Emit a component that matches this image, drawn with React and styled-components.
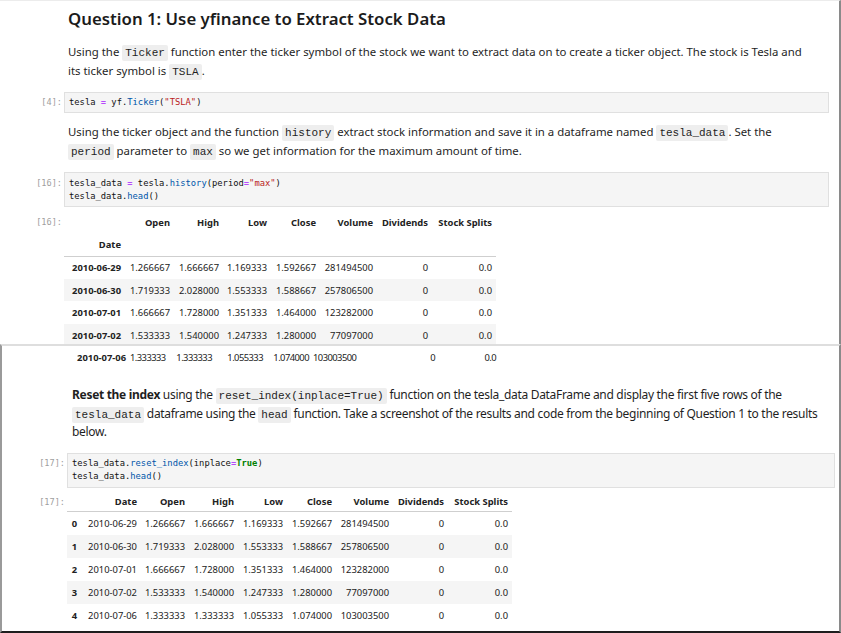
import React from "react"
import styled, { createGlobalStyle } from "styled-components"

const GlobalStyle = createGlobalStyle`
  html, body {
    margin: 0;
    padding: 0;
    background: #fff;
  }
  body {
    font-family: "Noto Sans", "Open Sans", sans-serif;
    color: #212121;
  }
`

const firstFrame = [
  ["2010-06-29", "1.266667", "1.666667", "1.169333", "1.592667", "281494500", "0", "0.0"],
  ["2010-06-30", "1.719333", "2.028000", "1.553333", "1.588667", "257806500", "0", "0.0"],
  ["2010-07-01", "1.666667", "1.728000", "1.351333", "1.464000", "123282000", "0", "0.0"],
  ["2010-07-02", "1.533333", "1.540000", "1.247333", "1.280000", "77097000", "0", "0.0"],
]
const lastRow = ["2010-07-06", "1.333333", "1.333333", "1.055333", "1.074000", "103003500", "0", "0.0"]
const allRows = [...firstFrame, lastRow]
const columns = ["Open", "High", "Low", "Close", "Volume", "Dividends", "Stock Splits"]

// column widths measured off the two screenshots
const widthsByDate = [61, 49, 49, 48, 49, 57, 55, 64]
const widthsTail = [63, 39, 47, 51, 46, 41, 85, 61]
const widthsReset = [14, 60, 48, 49, 49, 49, 57, 55, 64]

const Shot = styled.section`
  box-sizing: border-box;
  width: 841px;
  height: ${(p) => p.$h}px;
  overflow: hidden;
  border-right: 2px solid #8a8a8a;
  border-top: ${(p) => (p.$bottom ? "2px solid #dedede" : "1px solid #ececec")};
  border-left: ${(p) => (p.$bottom ? "2px solid #9a9a9a" : "none")};
  border-bottom: ${(p) => (p.$bottom ? "2px solid #1e1e1e" : "none")};
  padding-right: ${(p) => (p.$bottom ? 4 : 10)}px;
`

const CellRow = styled.div`
  display: flex;
  align-items: flex-start;
  margin-top: ${(p) => p.$mt || 0}px;
`

const Prompt = styled.div`
  flex: 0 0 ${(p) => p.$w || 64}px;
  box-sizing: border-box;
  padding-right: 2px;
  padding-top: ${(p) => p.$pt || 0}px;
  text-align: right;
  font-family: "DejaVu Sans Mono", "Liberation Mono", monospace;
  font-size: 8.6px;
  line-height: ${(p) => p.$lh || 13}px;
  color: #a0a0a0;
`

const Body = styled.div`
  flex: 1;
  min-width: 0;
`

const Title = styled.h2`
  margin: 0;
  padding-left: 4px;
  font-size: 16.8px;
  font-weight: 600;
  line-height: 22px;
  color: #1b1b1b;
`

const Prose = styled.p`
  margin: 0;
  padding-left: ${(p) => (p.$narrow ? 5 : 4)}px;
  font-size: ${(p) => (p.$narrow ? 12 : 11.4)}px;
  line-height: ${(p) => (p.$narrow ? 18.5 : 19)}px;
  letter-spacing: ${(p) => (p.$narrow ? "-0.31px" : "normal")};
  color: #1f1f1f;
  white-space: nowrap;

  b {
    font-weight: 700;
  }
`

const InlineCode = styled.code`
  font-family: "Liberation Mono", "DejaVu Sans Mono", monospace;
  font-size: 11px;
  line-height: 1;
  letter-spacing: normal;
  background: #eeeeee;
  padding: 2px 3px;
  border-radius: 2px;
  color: #1e1e1e;
`

const CodeBox = styled.pre`
  margin: 0;
  background: #f5f5f5;
  border: 1px solid #e0e0e0;
  padding: ${(p) => (p.$single ? "3px 4px" : "3.5px 4px")};
  font-family: "DejaVu Sans Mono", "Liberation Mono", monospace;
  font-size: 8.8px;
  line-height: 13px;
  color: #111;
`

const tokenColours = {
  op: "#aa22ff",
  fn: "#0055aa",
  str: "#ba2121",
  kw: "#008000",
}

const Tok = styled.span`
  color: ${(p) => tokenColours[p.$k]};
  font-weight: ${(p) => (p.$k === "kw" ? 700 : 400)};
`

const Frame = styled.table`
  border-collapse: collapse;
  table-layout: fixed;
  font-family: "Noto Sans", "Open Sans", sans-serif;
  font-size: 9.4px;
  color: #222;
`

const HeadRow = styled.tr`
  height: ${(p) => p.$h}px;

  &:last-child th {
    border-bottom: 1px solid #cfcfcf;
  }
`

const HeadCell = styled.th`
  padding: 0 4px 0 0;
  text-align: right;
  font-weight: 700;
  white-space: nowrap;
  vertical-align: middle;
`

const DataRow = styled.tr`
  height: ${(p) => p.$h}px;
  background: ${(p) => (p.$striped ? "#f5f5f5" : "transparent")};
`

const DataCell = styled.td`
  padding: 0 ${(p) => p.$pr ?? 4}px 0 0;
  text-align: right;
  white-space: nowrap;
  vertical-align: middle;
  font-weight: ${(p) => (p.$bold ? 700 : 400)};
  letter-spacing: ${(p) => (p.$squeeze ? "-0.55px" : "normal")};
`

const Cols = ({ widths }) => (
  <colgroup>
    {widths.map((w, i) => (
      <col key={i} style={{ width: w }} />
    ))}
  </colgroup>
)

const ByDateTable = () => (
  <Frame style={{ width: widthsByDate.reduce((a, b) => a + b, 0) }}>
    <Cols widths={widthsByDate} />
    <thead>
      <HeadRow $h={21}>
        <HeadCell />
        {columns.map((c) => (
          <HeadCell key={c}>{c}</HeadCell>
        ))}
      </HeadRow>
      <HeadRow $h={23}>
        <HeadCell>Date</HeadCell>
        {columns.map((c) => (
          <HeadCell key={c} />
        ))}
      </HeadRow>
    </thead>
    <tbody>
      {firstFrame.map((row, i) => (
        <DataRow key={row[0]} $h={22.7} $striped={i % 2 === 1}>
          {row.map((v, j) => (
            <DataCell key={j} $bold={j === 0}>
              {v}
            </DataCell>
          ))}
        </DataRow>
      ))}
    </tbody>
  </Frame>
)

// the last row of the first frame, as it shows at the top of the second screenshot
const TailRow = () => (
  <Frame style={{ width: widthsTail.reduce((a, b) => a + b, 0) }}>
    <Cols widths={widthsTail} />
    <tbody>
      <DataRow $h={22}>
        {lastRow.map((v, j) => (
          <DataCell key={j} $bold={j === 0} $squeeze={j > 0} $pr={j === 5 ? 1 : 4}>
            {v}
          </DataCell>
        ))}
      </DataRow>
    </tbody>
  </Frame>
)

const ResetTable = () => (
  <Frame style={{ width: widthsReset.reduce((a, b) => a + b, 0) }}>
    <Cols widths={widthsReset} />
    <thead>
      <HeadRow $h={20}>
        <HeadCell />
        <HeadCell>Date</HeadCell>
        {columns.map((c) => (
          <HeadCell key={c}>{c}</HeadCell>
        ))}
      </HeadRow>
    </thead>
    <tbody>
      {allRows.map((row, i) => (
        <DataRow key={row[0]} $h={23} $striped={i % 2 === 1}>
          <DataCell $bold>{i}</DataCell>
          {row.map((v, j) => (
            <DataCell key={j}>{v}</DataCell>
          ))}
        </DataRow>
      ))}
    </tbody>
  </Frame>
)

export default function App() {
  return (
    <>
      <GlobalStyle />
      <Shot $h={344}>
        <CellRow $mt={7}>
          <Prompt />
          <Body>
            <Title>Question 1: Use yfinance to Extract Stock Data</Title>
          </Body>
        </CellRow>
        <CellRow $mt={12}>
          <Prompt />
          <Body>
            <Prose>
              Using the <InlineCode>Ticker</InlineCode> function enter the ticker symbol of the stock we want to
              extract data on to create a ticker object. The stock is Tesla and
              <br />
              its ticker symbol is <InlineCode>TSLA</InlineCode>.
            </Prose>
          </Body>
        </CellRow>
        <CellRow $mt={12}>
          <Prompt $pt={4}>[4]:</Prompt>
          <Body>
            <CodeBox $single>
              tesla <Tok $k="op">=</Tok> yf.<Tok $k="fn">Ticker</Tok>(<Tok $k="str">"TSLA"</Tok>)
            </CodeBox>
          </Body>
        </CellRow>
        <CellRow $mt={9}>
          <Prompt />
          <Body>
            <Prose>
              Using the ticker object and the function <InlineCode>history</InlineCode> extract stock information
              and save it in a dataframe named <InlineCode>tesla_data</InlineCode>. Set the
              <br />
              <InlineCode>period</InlineCode> parameter to <InlineCode>max</InlineCode> so we get information for
              the maximum amount of time.
            </Prose>
          </Body>
        </CellRow>
        <CellRow $mt={12}>
          <Prompt $pt={4.5}>[16]:</Prompt>
          <Body>
            <CodeBox>
              tesla_data <Tok $k="op">=</Tok> tesla.<Tok $k="fn">history</Tok>(period<Tok $k="op">=</Tok>
              <Tok $k="str">"max"</Tok>)
              {"\n"}tesla_data.<Tok $k="fn">head</Tok>()
            </CodeBox>
          </Body>
        </CellRow>
        <CellRow $mt={5}>
          <Prompt $lh={21}>[16]:</Prompt>
          <Body>
            <ByDateTable />
          </Body>
        </CellRow>
      </Shot>

      <Shot $h={289} $bottom>
        <CellRow>
          <Prompt $w={65} />
          <Body>
            <TailRow />
          </Body>
        </CellRow>
        <CellRow $mt={18}>
          <Prompt $w={65} />
          <Body>
            <Prose $narrow>
              <b>Reset the index</b> using the <InlineCode>reset_index(inplace=True)</InlineCode> function on the
              tesla_data DataFrame and display the first five rows of the
              <br />
              <InlineCode>tesla_data</InlineCode> dataframe using the <InlineCode>head</InlineCode> function. Take a
              screenshot of the results and code from the beginning of Question 1 to the results
              <br />
              below.
            </Prose>
          </Body>
        </CellRow>
        <CellRow $mt={11}>
          <Prompt $w={65} $pt={4.5}>[17]:</Prompt>
          <Body>
            <CodeBox>
              tesla_data.<Tok $k="fn">reset_index</Tok>(inplace<Tok $k="op">=</Tok>
              <Tok $k="kw">True</Tok>)
              {"\n"}tesla_data.<Tok $k="fn">head</Tok>()
            </CodeBox>
          </Body>
        </CellRow>
        <CellRow $mt={4}>
          <Prompt $w={65} $lh={20}>[17]:</Prompt>
          <Body>
            <ResetTable />
          </Body>
        </CellRow>
      </Shot>
    </>
  )
}
